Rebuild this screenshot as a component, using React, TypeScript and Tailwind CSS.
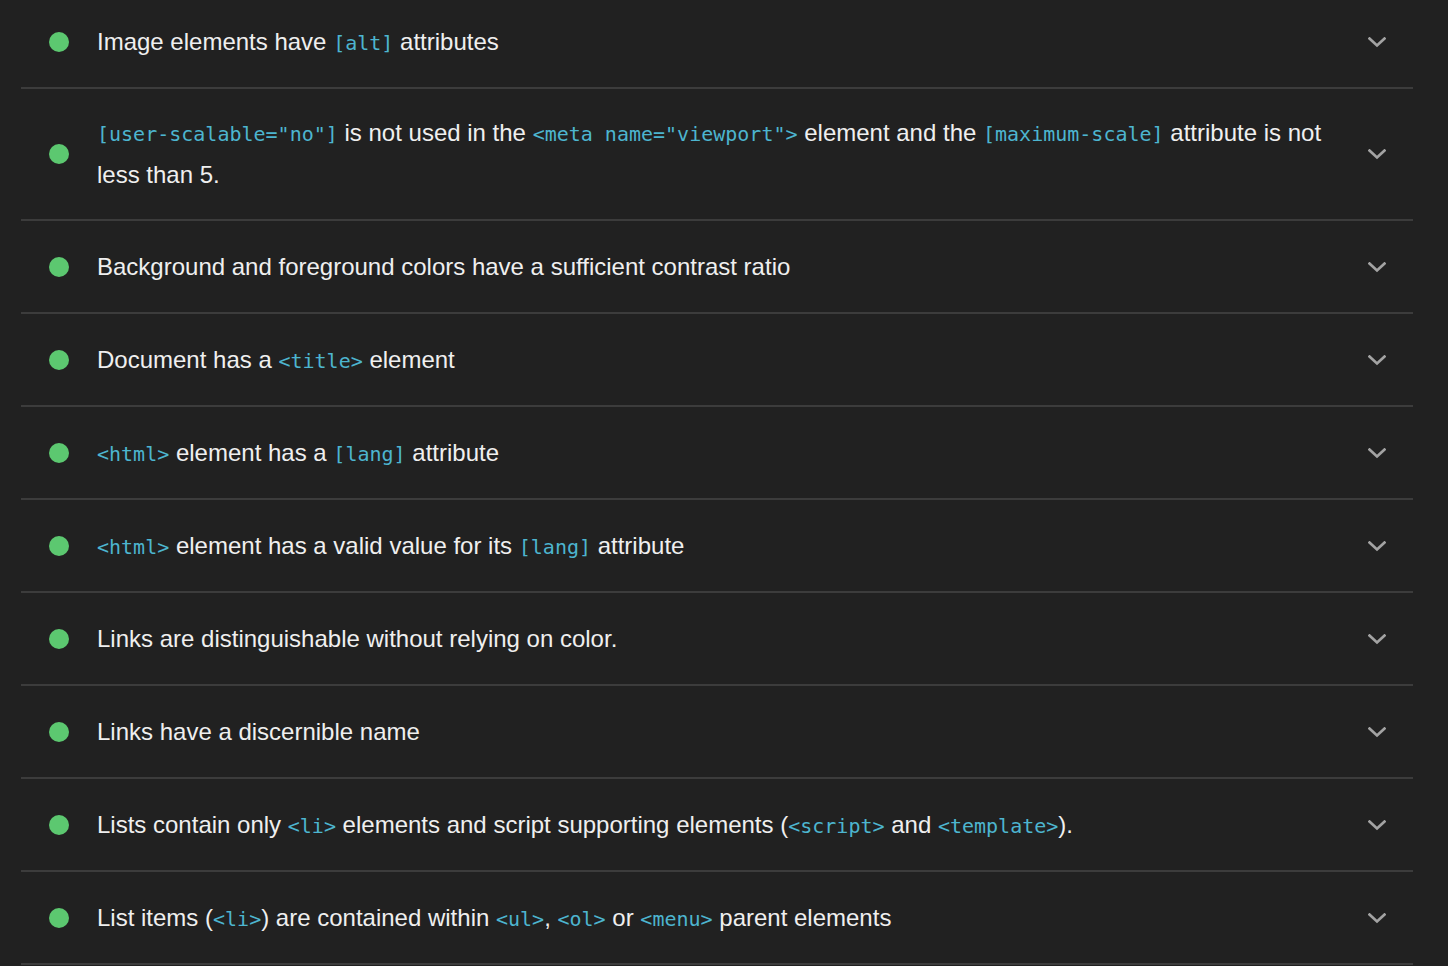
import React from "react";

type Part = string | { c: string };
const C = (c: string) => ({ c });

const rows: Part[][] = [
  ["Image elements have ", C("[alt]"), " attributes"],
  [
    C('[user-scalable="no"]'),
    " is not used in the ",
    C('<meta name="viewport">'),
    " element and the ",
    C("[maximum-scale]"),
    " attribute is not less than 5.",
  ],
  ["Background and foreground colors have a sufficient contrast ratio"],
  ["Document has a ", C("<title>"), " element"],
  [C("<html>"), " element has a ", C("[lang]"), " attribute"],
  [C("<html>"), " element has a valid value for its ", C("[lang]"), " attribute"],
  ["Links are distinguishable without relying on color."],
  ["Links have a discernible name"],
  [
    "Lists contain only ",
    C("<li>"),
    " elements and script supporting elements (",
    C("<script>"),
    " and ",
    C("<template>"),
    ").",
  ],
  [
    "List items (",
    C("<li>"),
    ") are contained within ",
    C("<ul>"),
    ", ",
    C("<ol>"),
    " or ",
    C("<menu>"),
    " parent elements",
  ],
];

function Chevron() {
  return (
    <svg width="18" height="11" viewBox="0 0 18 11" fill="none">
      <path
        d="M1.5 1.5 L9 8.5 L16.5 1.5"
        stroke="#a3a3a3"
        strokeWidth="2.6"
        strokeLinecap="square"
        strokeLinejoin="miter"
      />
    </svg>
  );
}

export default function App() {
  return (
    <div
      className="w-[1448px] h-[966px] overflow-hidden bg-[#212121]"
      style={{ fontFamily: '"Liberation Sans", Arial, sans-serif' }}
    >
      <div className="ml-[21px] w-[1392px] -mt-[4px]">
        {rows.map((parts, i) => (
          <div
            key={i}
            className={
              i === 1
                ? "flex items-center border-b-2 border-[#3c3c3c] pt-[23px] pb-[23px] pl-[28px] pr-[27px]"
                : "flex items-center border-b-2 border-[#3c3c3c] pt-[25px] pb-[24px] pl-[28px] pr-[27px]"
            }
          >
            <div className="w-[20px] h-[20px] rounded-full bg-[#5cc870] shrink-0" />
            <div className="flex-1 ml-[28px] mr-[20px] text-[24px] leading-[42px] text-[#efefef]">
              {parts.map((p, j) =>
                typeof p === "string" ? (
                  <span key={j}>{p}</span>
                ) : (
                  <code
                    key={j}
                    className="text-[20px] leading-none text-[#4db5cf]"
                    style={{ fontFamily: '"DejaVu Sans Mono", "Liberation Mono", monospace' }}
                  >
                    {p.c}
                  </code>
                )
              )}
            </div>
            <div className="shrink-0 w-[18px] flex items-center justify-center">
              <Chevron />
            </div>
          </div>
        ))}
      </div>
    </div>
  );
}
